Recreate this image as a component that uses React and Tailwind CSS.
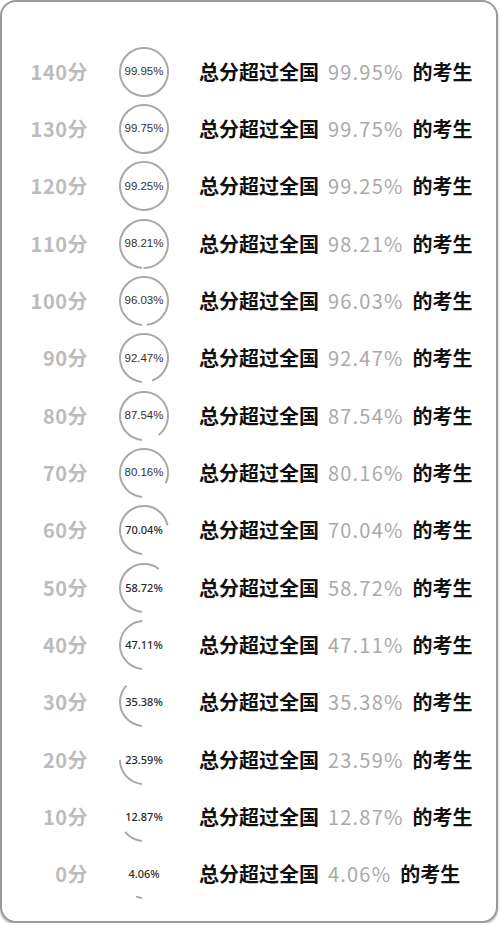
import React from 'react';

const rows = [
  { score: 140, pct: '99.95' },
  { score: 130, pct: '99.75' },
  { score: 120, pct: '99.25' },
  { score: 110, pct: '98.21' },
  { score: 100, pct: '96.03' },
  { score: 90, pct: '92.47' },
  { score: 80, pct: '87.54' },
  { score: 70, pct: '80.16' },
  { score: 60, pct: '70.04' },
  { score: 50, pct: '58.72' },
  { score: 40, pct: '47.11' },
  { score: 30, pct: '35.38' },
  { score: 20, pct: '23.59' },
  { score: 10, pct: '12.87' },
  { score: 0, pct: '4.06' },
];

const R = 24;
const C = 2 * Math.PI * R;

// progress ring: starts at the bottom and runs clockwise
const Ring = ({ pct }) => {
  const value = parseFloat(pct);
  const len = (value / 100) * C;
  return (
    <div className="relative w-[50px] h-[50px] shrink-0">
      <svg width="50" height="50" viewBox="0 0 50 50" className="absolute inset-0">
        <circle
          cx="25"
          cy="25"
          r={R}
          fill="none"
          stroke="#a9a9a9"
          strokeWidth="2"
          strokeDasharray={`${len} ${C}`}
          transform="rotate(95 25 25)"
        />
      </svg>
      <div
        className={
          value < 75
            ? "absolute inset-0 flex items-center justify-center text-[11px] font-medium text-[#2a2a2a] font-['Noto_Sans',sans-serif]"
            : "absolute inset-0 flex items-center justify-center text-[11.5px] text-[#333] font-['Liberation_Sans',Arial,sans-serif]"
        }
      >
        {pct}%
      </div>
    </div>
  );
};

export default function App() {
  return (
    <div className="w-[498px] h-[923px] border-2 border-[#9a9a9a] rounded-[16px] bg-white shadow-[0_2px_2px_rgba(0,0,0,0.25)] font-['Noto_Sans_CJK_SC','Noto_Sans',sans-serif]">
      <div className="pt-[41px] flex flex-col">
        {rows.map((r) => (
          <div key={r.score} className="h-[57.35px] flex items-center">
            <div className="w-[86px] text-right text-[20px] font-semibold text-[#bcbcbc] leading-none tracking-[0.5px]">
              {r.score}分
            </div>
            <div className="ml-[31px]">
              <Ring pct={r.pct} />
            </div>
            <div className="ml-[30px] text-[20px] font-bold text-[#111] leading-none whitespace-nowrap">
              总分超过全国
              <span className="mx-[9px] font-normal text-[#aaa] tracking-[1.2px]">{r.pct}%</span>
              的考生
            </div>
          </div>
        ))}
      </div>
    </div>
  );
}
